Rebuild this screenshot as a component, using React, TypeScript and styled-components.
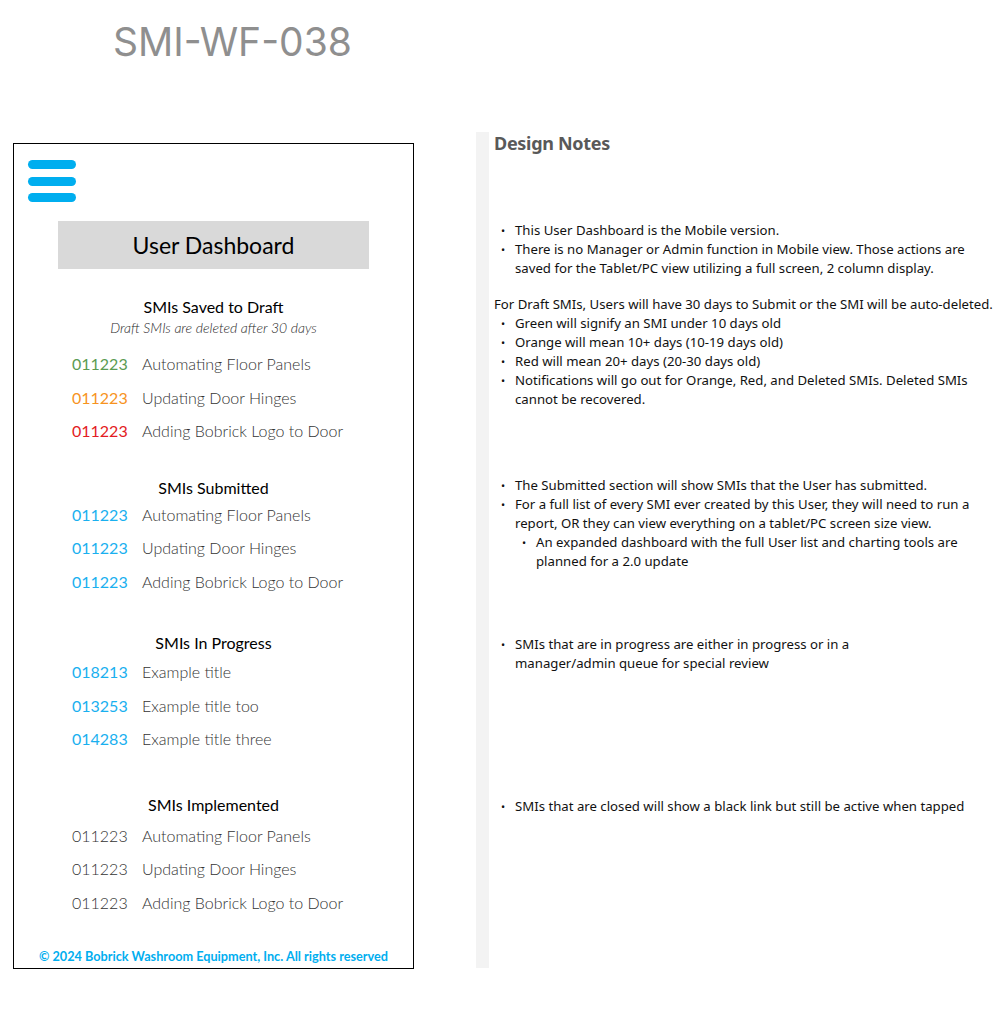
import React from "react";
import styled, { createGlobalStyle } from "styled-components";

const Global = createGlobalStyle`
  html, body { margin: 0; padding: 0; background: #fff; }
  body { width: 999px; min-height: 1013px; font-family: "Noto Sans", sans-serif; }
`;

const Page = styled.div`
  width: 999px;
  height: 1013px;
  display: flex;
  flex-direction: column;
`;

const Title = styled.h1`
  margin: 0;
  padding: 18px 0 0 113px;
  height: 132px;
  box-sizing: border-box;
  font-family: "Inter", "Noto Sans", sans-serif;
  font-weight: 400;
  font-size: 39px;
  line-height: 48px;
  color: #8f8f8f;
  letter-spacing: 0;
`;

const Main = styled.div`
  display: flex;
  align-items: flex-start;
`;

const Phone = styled.div`
  margin: 11px 0 0 13px;
  width: 401px;
  height: 826px;
  box-sizing: border-box;
  border: 1px solid #000;
  padding: 16px 14px 0 14px;
  display: flex;
  flex-direction: column;
  font-family: "Lato", sans-serif;
`;

const Burger = styled.div`
  display: flex;
  flex-direction: column;
  gap: 7.5px;
  width: 48px;
`;

const Bar = styled.span`
  display: block;
  height: 9px;
  border-radius: 5px;
  background: #00aeef;
`;

const DashBox = styled.div`
  margin: 19px auto 0;
  width: 311px;
  height: 48px;
  background: #d9d9d9;
  display: flex;
  align-items: center;
  justify-content: center;
  font-size: 23px;
  color: #000;
`;

const Section = styled.section<{ $top: number }>`
  margin-top: ${(p) => p.$top}px;
  display: flex;
  flex-direction: column;
`;

const Heading = styled.h2`
  margin: 0;
  text-align: center;
  font-size: 16px;
  font-weight: 400;
  line-height: 20px;
  color: #000;
`;

const Sub = styled.p`
  margin: 2px 0 0;
  text-align: center;
  font-size: 14px;
  font-style: italic;
  font-weight: 300;
  line-height: 18px;
  color: #2a2a2a;
`;

const List = styled.div<{ $top: number }>`
  margin-top: ${(p) => p.$top}px;
  padding-left: 44px;
  display: flex;
  flex-direction: column;
`;

const Row = styled.div`
  display: flex;
  height: 33.5px;
  align-items: center;
  font-size: 16px;
  font-weight: 300;
`;

const Num = styled.span<{ $color: string }>`
  width: 70px;
  color: ${(p) => p.$color};
  font-weight: ${(p) => (p.$color === "#333" ? 300 : 400)};
`;

const ItemTitle = styled.span`
  color: #333;
`;

const Footer = styled.div`
  margin-top: 29px;
  text-align: center;
  font-size: 12.7px;
  font-weight: 700;
  line-height: 16px;
  color: #00aeef;
`;

const Notes = styled.div`
  margin-left: 62px;
  width: 523px;
  height: 836px;
  box-sizing: border-box;
  border-left: 13px solid #f3f3f3;
  padding-left: 5px;
  display: flex;
  flex-direction: column;
  font-family: "Noto Sans", sans-serif;
  font-size: 13.2px;
  line-height: 19px;
  color: #111;
`;

const NotesHeading = styled.h3`
  margin: 0;
  font-size: 18px;
  font-weight: 700;
  line-height: 22px;
  color: #595959;
  letter-spacing: -0.3px;
`;

const Block = styled.div<{ $top: number }>`
  margin-top: ${(p) => p.$top}px;
`;

const Para = styled.p`
  margin: 0;
  white-space: nowrap;
`;

const Bullets = styled.ul`
  margin: 0;
  padding: 0;
  list-style: none;
`;

const Bullet = styled.li`
  position: relative;
  padding-left: 21px;
  &::before {
    content: "•";
    position: absolute;
    left: 7px;
    top: 0;
    font-size: 11px;
  }
`;

type Item = { num: string; title: string; color: string };

const GREEN = "#5b9b52";
const ORANGE = "#f7931e";
const RED = "#e31b23";
const BLUE = "#1ab0ef";
const GRAY = "#333";

const draft: Item[] = [
  { num: "011223", title: "Automating Floor Panels", color: GREEN },
  { num: "011223", title: "Updating Door Hinges", color: ORANGE },
  { num: "011223", title: "Adding Bobrick Logo to Door", color: RED },
];
const submitted: Item[] = [
  { num: "011223", title: "Automating Floor Panels", color: BLUE },
  { num: "011223", title: "Updating Door Hinges", color: BLUE },
  { num: "011223", title: "Adding Bobrick Logo to Door", color: BLUE },
];
const progress: Item[] = [
  { num: "018213", title: "Example title", color: BLUE },
  { num: "013253", title: "Example title too", color: BLUE },
  { num: "014283", title: "Example title three", color: BLUE },
];
const implemented: Item[] = [
  { num: "011223", title: "Automating Floor Panels", color: GRAY },
  { num: "011223", title: "Updating Door Hinges", color: GRAY },
  { num: "011223", title: "Adding Bobrick Logo to Door", color: GRAY },
];

const Rows = ({ items, top }: { items: Item[]; top: number }) => (
  <List $top={top}>
    {items.map((it, i) => (
      <Row key={i}>
        <Num $color={it.color}>{it.num}</Num>
        <ItemTitle>{it.title}</ItemTitle>
      </Row>
    ))}
  </List>
);

export default function App() {
  return (
    <Page>
      <Global />
      <Title>SMI-WF-038</Title>
      <Main>
        <Phone>
          <Burger>
            <Bar />
            <Bar />
            <Bar />
          </Burger>
          <DashBox>User Dashboard</DashBox>
          <Section $top={28}>
            <Heading>SMIs Saved to Draft</Heading>
            <Sub>Draft SMIs are deleted after 30 days</Sub>
            <Rows items={draft} top={10} />
          </Section>
          <Section $top={30}>
            <Heading>SMIs Submitted</Heading>
            <Rows items={submitted} top={0} />
          </Section>
          <Section $top={35}>
            <Heading>SMIs In Progress</Heading>
            <Rows items={progress} top={2} />
          </Section>
          <Section $top={39}>
            <Heading>SMIs Implemented</Heading>
            <Rows items={implemented} top={4} />
          </Section>
          <Footer>© 2024 Bobrick Washroom Equipment, Inc. All rights reserved</Footer>
        </Phone>
        <Notes>
          <NotesHeading>Design Notes</NotesHeading>
          <Block $top={67}>
            <Bullets>
              <Bullet>This User Dashboard is the Mobile version.</Bullet>
              <Bullet>
                There is no Manager or Admin function in Mobile view. Those actions are
                saved for the Tablet/PC view utilizing a full screen, 2 column display.
              </Bullet>
            </Bullets>
          </Block>
          <Block $top={17}>
            <Para>For Draft SMIs, Users will have 30 days to Submit or the SMI will be auto-deleted.</Para>
            <Bullets>
              <Bullet>Green will signify an SMI under 10 days old</Bullet>
              <Bullet>Orange will mean 10+ days (10-19 days old)</Bullet>
              <Bullet>Red will mean 20+ days (20-30 days old)</Bullet>
              <Bullet>
                Notifications will go out for Orange, Red, and Deleted SMIs. Deleted SMIs
                cannot be recovered.
              </Bullet>
            </Bullets>
          </Block>
          <Block $top={67}>
            <Bullets>
              <Bullet>The Submitted section will show SMIs that the User has submitted.</Bullet>
              <Bullet>
                For a full list of every SMI ever created by this User, they will need to run a
                report, OR they can view everything on a tablet/PC screen size view.
                <Bullets>
                  <Bullet>
                    An expanded dashboard with the full User list and charting tools are
                    planned for a 2.0 update
                  </Bullet>
                </Bullets>
              </Bullet>
            </Bullets>
          </Block>
          <Block $top={64}>
            <Bullets>
              <Bullet>
                SMIs that are in progress are either in progress or in a
                <br />
                manager/admin queue for special review
              </Bullet>
            </Bullets>
          </Block>
          <Block $top={124}>
            <Bullets>
              <Bullet>SMIs that are closed will show a black link but still be active when tapped</Bullet>
            </Bullets>
          </Block>
        </Notes>
      </Main>
    </Page>
  );
}
